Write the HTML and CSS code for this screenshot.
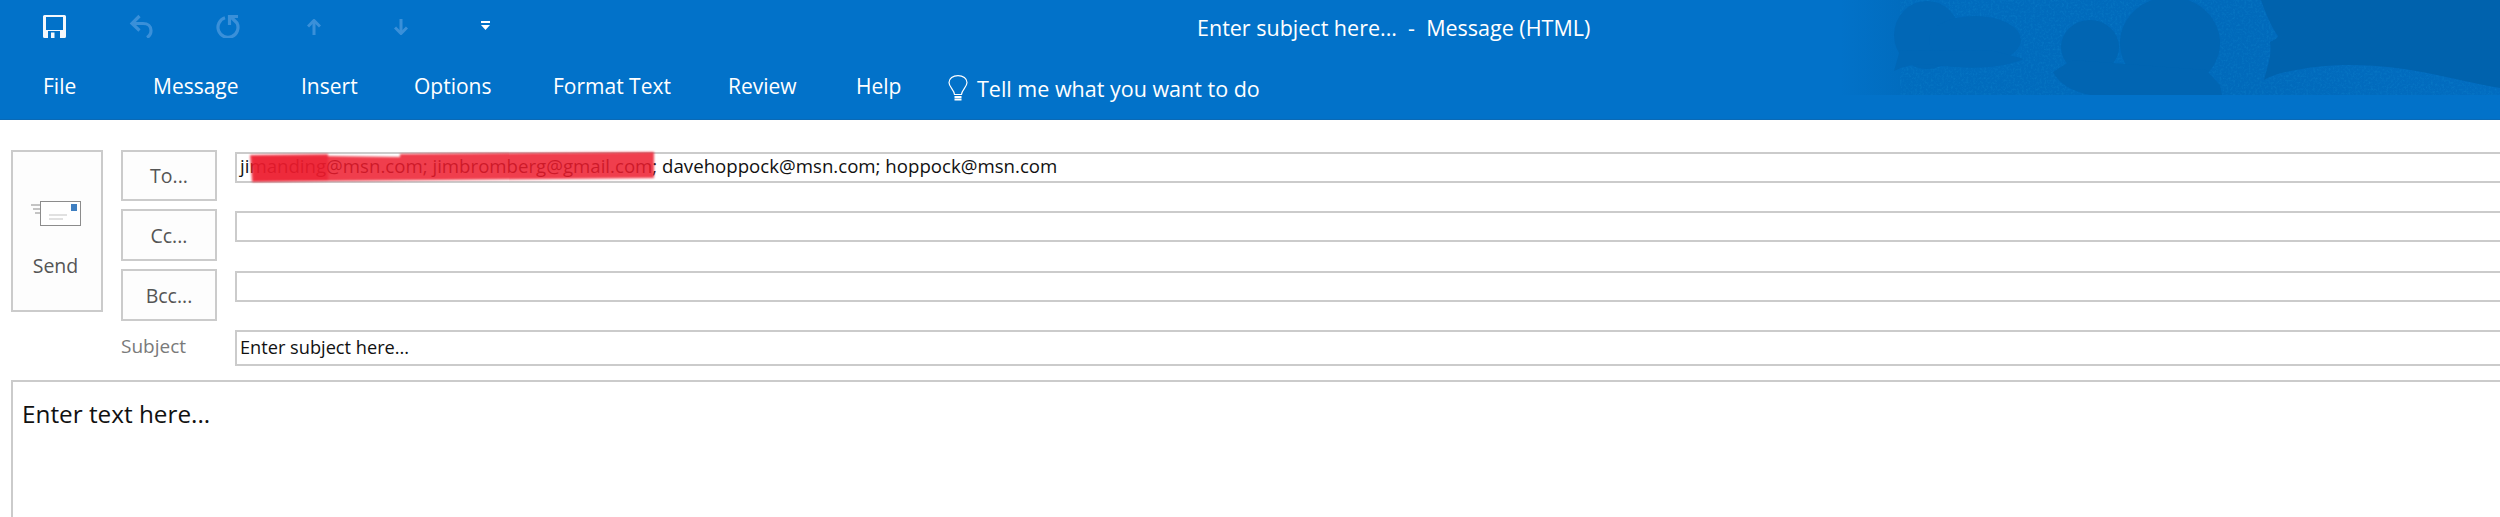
FILE: index.html

```html
<!DOCTYPE html>
<html lang="en">
<head>
  <meta charset="UTF-8">
  <title>Enter subject here... - Message (HTML)</title>
  <link rel="stylesheet" href="styles.css">
</head>
<body>

  <header class="ribbon">
    <svg class="ribbon-art" width="660" height="95" viewBox="0 0 660 95">
      <defs>
        <linearGradient id="fade" x1="0" x2="1" y1="0" y2="0">
          <stop offset="0" stop-color="#016cbe" stop-opacity="0"/>
          <stop offset="0.1" stop-color="#016cbe" stop-opacity="1"/>
          <stop offset="0.62" stop-color="#016abb"/>
          <stop offset="1" stop-color="#026cc0"/>
        </linearGradient>
        <filter id="grain" x="0" y="0" width="100%" height="100%">
          <feTurbulence type="fractalNoise" baseFrequency="0.45" numOctaves="2" seed="4"/>
          <feColorMatrix values="0 0 0 0 0.02  0 0 0 0 0.46  0 0 0 0 0.82  1.6 0 0 0 -0.72"/>
        </filter>
      </defs>
      <rect width="660" height="95" fill="url(#fade)"/>
      <rect x="60" width="600" height="95" filter="url(#grain)" opacity=".22"/>
      <g fill="#0167b6">
        <ellipse cx="87" cy="35" rx="33" ry="34"/>
        <ellipse cx="135" cy="40" rx="46" ry="24"/>
        <path d="M60 50 54 71c12-6 24-8 40-6 26 3 60 6 90-6l-30-8z"/>
      </g>
      <g fill="#0165b2">
        <ellipse cx="250" cy="47" rx="29" ry="27"/>
        <ellipse cx="330" cy="43" rx="50" ry="46"/>
        <path d="M232 60 213 72c6 12 20 20 38 23h131l-2-10-14-15z"/>
      </g>
      <path d="M421 0h239v88c-34-6-62-14-96-19-40-6-78-5-108 1-12 2-24 5-32 10 4-14 8-26 6-38 4-2 8-4 8-6-6-8-12-22-17-36z" fill="#0062ad"/>
    </svg>

    <div class="ribbon-top">
      <svg class="qa qa-save" width="23" height="23" viewBox="0 0 23 23">
        <path d="M1.500 0h20A1.500 1.500 0 0 1 23 1.500v20a1.500 1.500 0 0 1-1.500 1.500h-20A1.500 1.500 0 0 1 0 21.500v-20A1.500 1.500 0 0 1 1.500 0z" fill="#f4f8fc"/>
        <rect x="3" y="2" width="17" height="13" fill="#0272c9"/>
        <rect x="5" y="16" width="12" height="7" fill="#0272c9"/>
        <rect x="8" y="17.500" width="3.500" height="5.500" fill="#f4f8fc"/>
      </svg>
      <svg class="qa qa-undo" width="24" height="24" viewBox="0 0 24 24" fill="none" stroke="#3a90d9" stroke-width="3.200">
        <path d="M10.500 2 3 9.500l7.500 7"/>
        <path d="M3.500 9.500H14c5 0 8 3 8 7 0 3-1.500 5.500-4 7"/>
      </svg>
      <svg class="qa qa-redo" width="24" height="24" viewBox="0 0 24 24" fill="none" stroke="#3a90d9" stroke-width="3.200">
        <path d="M9 3.800A10 10 0 1 0 21 9L15 3"/>
        <path d="M13.500 11V2.500H22"/>
      </svg>
      <svg class="qa qa-up" width="14" height="16" viewBox="0 0 14 16" fill="none" stroke="#3a90d9" stroke-width="3">
        <path d="M1 7.500 7 1.500l6 6"/>
        <path d="M7 2v14"/>
      </svg>
      <svg class="qa qa-down" width="14" height="16" viewBox="0 0 14 16" fill="none" stroke="#3a90d9" stroke-width="3">
        <path d="M1 8.500l6 6 6-6"/>
        <path d="M7 14V0"/>
      </svg>
      <svg class="qa qa-more" width="9" height="9" viewBox="0 0 9 9">
        <rect width="9" height="2" fill="#fff"/>
        <path d="M0 4h9L4.500 9z" fill="#fff"/>
      </svg>
      <div class="title">Enter subject here...&nbsp; -&nbsp; Message (HTML)</div>
    </div>

    <nav class="tabs">
      <span>File</span>
      <span>Message</span>
      <span>Insert</span>
      <span>Options</span>
      <span>Format Text</span>
      <span>Review</span>
      <span>Help</span>
      <div class="tell">
        <svg width="20" height="27" viewBox="0 0 20 27" fill="none" stroke="#fff" stroke-width="1.200">
          <path d="M6.500 19.500C6 14.500 1 12 1 7.500 1 3.500 5 .6 10 .6s9 2.900 9 6.900c0 4.500-5 7-5.500 12z"/>
          <path d="M6.500 22h7M6.500 24.500h7" stroke-width="1.800"/>
        </svg>
        <span>Tell me what you want to do</span>
      </div>
    </nav>
  </header>

  <main class="compose">
    <button class="send">
      <svg width="50" height="26" viewBox="0 0 50 26">
        <rect x="9.500" y="0.500" width="40" height="24" fill="#fff" stroke="#8c8c8c"/>
        <rect x="40" y="3" width="6" height="7" fill="#3f7fc1"/>
        <path d="M18 14h18M18 18h14" stroke="#c4c4c4" stroke-width="1.200"/>
        <path d="M0 4h9M2 8h7M4 12h5" stroke="#8c8c8c" stroke-width="1.200"/>
      </svg>
      <span>Send</span>
    </button>

    <div class="fields">
      <button class="addr-btn">To...</button>
      <div class="field field-addr">
        <span class="to-text">jimanding@msn.com; jimbromberg@gmail.com; davehoppock@msn.com; hoppock@msn.com</span>
        <svg class="smear" width="404" height="30" viewBox="0 0 404 30">
          <path d="M0 3 78 2v2l72 1 0-3L404 0v26l-214 2-112 1-76 1-1-15z" fill="#ed1c2e" fill-opacity=".85"/>
          <path d="M2 4h76v25H4z" fill="#ed1c2e" fill-opacity=".55"/>
        </svg>
      </div>

      <button class="addr-btn">Cc...</button>
      <div class="field"></div>

      <button class="addr-btn">Bcc...</button>
      <div class="field"></div>

      <label class="subject-label">Subject</label>
      <div class="field field-subject">Enter subject here...</div>
    </div>
  </main>

  <div class="body-box">Enter text here...</div>

</body>
</html>
```

FILE: styles.css

```css
body {
  font-family: 'Open Sans', 'Noto Sans', sans-serif;
  background: white;
  margin: 0;
  height: 517px;
  overflow: hidden;
  display: flex;
  flex-direction: column;
}

.ribbon {
  position: relative;
  height: 119px;
  background: #0272c9;
  border-bottom: 1px solid #0a69b5;
  color: white;
  flex-shrink: 0;
}

.ribbon-art {
  position: absolute;
  top: 0;
  right: 0;
}

.ribbon-top {
  position: relative;
  height: 58px;
  display: flex;
  align-items: flex-start;
  padding-left: 43px;
}

.qa {
  margin-top: 15px;
  flex-shrink: 0;
}

.qa-undo {
  margin-left: 63px;
  margin-top: 14px;
}

.qa-redo {
  margin-left: 63px;
  margin-top: 14px;
}

.qa-up {
  margin-left: 67px;
  margin-top: 19px;
}

.qa-down {
  margin-left: 73px;
  margin-top: 19px;
}

.qa-more {
  margin-left: 73px;
  margin-top: 21px;
}

.title {
  margin-left: 707px;
  margin-top: 13px;
  font-size: 21.500px;
  line-height: 30px;
  white-space: pre;
}

.tabs {
  position: relative;
  display: grid;
  grid-template-columns: 110px 148px 113px 139px 175px 128px 92px auto;
  align-items: center;
  padding-left: 43px;
  height: 56px;
  font-size: 21px;
}

.tell {
  display: flex;
  align-items: center;
  gap: 9px;
  margin-top: 4px;
  font-size: 21.500px;
}

.compose {
  display: flex;
  gap: 18px;
  padding: 30px 0 0 11px;
  flex-shrink: 0;
}

button {
  font-family: inherit;
  background: #fdfdfd;
  border: 2px solid #cbcbcb;
  color: #555;
  padding: 0;
}

.send {
  width: 92px;
  height: 162px;
  display: flex;
  flex-direction: column;
  align-items: center;
  font-size: 19.500px;
  padding: 49px 3px 0 0;
  gap: 25px;
}

.send span {
  line-height: 28px;
}

.fields {
  flex: 1;
  display: grid;
  grid-template-columns: 96px 1fr;
  grid-template-rows: 51px 52px 52px auto;
  column-gap: 18px;
  row-gap: 8px;
}

.addr-btn {
  font-size: 19.500px;
}

.field {
  height: 31px;
  margin-top: 2px;
  box-sizing: border-box;
  border: 2px solid #cbcbcb;
  border-right: none;
  background: white;
  padding-left: 3px;
  font-size: 18.650px;
  color: #111;
  white-space: nowrap;
}

.field-addr {
  position: relative;
  line-height: 24px;
}

.smear {
  position: absolute;
  left: 13px;
  top: -2px;
  filter: blur(1px);
}

.subject-label {
  margin-top: 1px;
  height: 35px;
  line-height: 32px;
  font-size: 19px;
  color: #7a7a7a;
}

.field-subject {
  height: 36px;
  margin-top: 1px;
  line-height: 30px;
  font-size: 18.200px;
}

.body-box {
  flex: 1;
  margin: 14px 0 0 11px;
  border: 2px solid #cbcbcb;
  border-right: none;
  border-bottom: none;
  padding: 15px 0 0 9px;
  font-size: 24.300px;
  line-height: 34px;
  color: #111;
}
```
